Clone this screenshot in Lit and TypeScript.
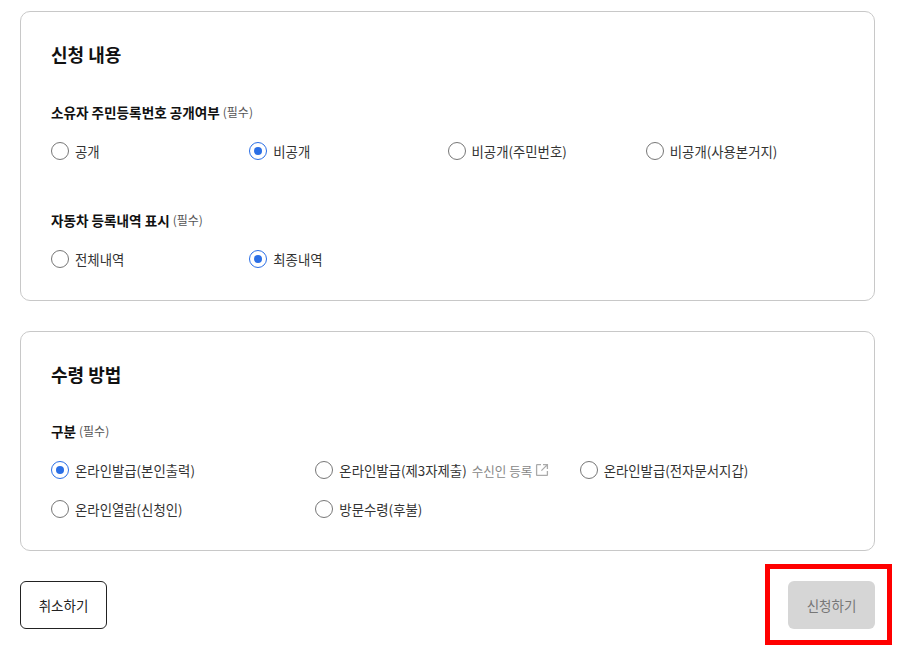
import { LitElement, html, css } from "lit";
import { customElement } from "lit/decorators.js";

@customElement("app-root")
export class AppRoot extends LitElement {
  static styles = css`
    :host {
      display: block;
      position: relative;
      width: 901px;
      height: 660px;
      background: #fff;
      font-family: "Noto Sans CJK KR", "Noto Sans", sans-serif;
      color: #111;
      box-sizing: border-box;
      overflow: hidden;
    }
    .page {
      width: 855px;
      margin-left: 20px;
      padding-top: 11px;
      display: flex;
      flex-direction: column;
      gap: 30px;
    }
    .card {
      border: 1px solid #c8c8c8;
      border-radius: 10px;
      padding: 30px 30px 31px;
      display: flex;
      flex-direction: column;
    }
    .card h2 {
      margin: 0;
      font-size: 18px;
      line-height: 25px;
      font-weight: 700;
    }
    .label {
      display: flex;
      align-items: center;
      gap: 3px;
      height: 20px;
      font-size: 13.6px;
      line-height: 20px;
      font-weight: 700;
      margin-top: 35px;
      white-space: nowrap;
    }
    .label small {
      font-size: 12px;
      font-weight: 400;
      color: #555;
    }
    .label.tight { margin-top: 34px; }
    .label.next { margin-top: 49px; }
    .grid {
      display: grid;
      margin-top: 19px;
    }
    .g4 { grid-template-columns: repeat(4, 1fr); }
    .g3 { grid-template-columns: repeat(3, 1fr); row-gap: 19px; }
    .opt {
      display: flex;
      align-items: center;
      height: 20px;
      gap: 6px;
      font-size: 13.4px;
      color: #333;
      white-space: nowrap;
    }
    .radio {
      width: 16px;
      height: 16px;
      border: 1px solid #777;
      border-radius: 50%;
      flex: none;
      display: flex;
      align-items: center;
      justify-content: center;
      background: #fff;
    }
    .radio.on { border-color: #2b6fe6; }
    .radio.on::after {
      content: "";
      width: 8px;
      height: 8px;
      border-radius: 50%;
      background: #2b6fe6;
    }
    .link {
      display: inline-flex;
      align-items: center;
      gap: 3px;
      margin-left: -1px;
      font-size: 12.6px;
      color: #888;
    }
    .link svg { display: block; }
    .actions {
      display: flex;
      justify-content: space-between;
    }
    button {
      width: 87px;
      height: 48px;
      border-radius: 6px;
      font: inherit;
      font-size: 13.5px;
      padding: 0;
      box-sizing: border-box;
    }
    .cancel {
      background: #fff;
      border: 1px solid #222;
      color: #222;
    }
    .submit {
      background: #d6d6d6;
      border: none;
      color: #777;
    }
    .mark {
      position: absolute;
      left: 765px;
      top: 564px;
      width: 127px;
      height: 81px;
      border: 5px solid #f00;
      box-sizing: border-box;
      pointer-events: none;
    }
  `;

  private opt(text: string, on = false, extra: unknown = null) {
    return html`<div class="opt"><span class=${on ? "radio on" : "radio"}></span><span>${text}</span>${extra}</div>`;
  }

  render() {
    const link = html`<span class="link">수신인 등록<svg width="14" height="14" viewBox="0 0 14 14" fill="none" stroke="#aaa" stroke-width="1.3">
        <path d="M6 1.6H2.2a.6.6 0 0 0-.6.6v9.6a.6.6 0 0 0 .6.6h9.6a.6.6 0 0 0 .6-.6V8" />
        <path d="M8 1.6h4.4V6M12.4 1.6 6.4 7.6" />
      </svg></span>`;
    return html`
      <div class="page">
        <section class="card">
          <h2>신청 내용</h2>
          <div class="label"><span>소유자 주민등록번호 공개여부</span><small>(필수)</small></div>
          <div class="grid g4">
            ${this.opt("공개")}
            ${this.opt("비공개", true)}
            ${this.opt("비공개(주민번호)")}
            ${this.opt("비공개(사용본거지)")}
          </div>
          <div class="label next"><span>자동차 등록내역 표시</span><small>(필수)</small></div>
          <div class="grid g4">
            ${this.opt("전체내역")}
            ${this.opt("최종내역", true)}
          </div>
        </section>
        <section class="card">
          <h2>수령 방법</h2>
          <div class="label tight"><span>구분</span><small>(필수)</small></div>
          <div class="grid g3">
            ${this.opt("온라인발급(본인출력)", true)}
            ${this.opt("온라인발급(제3자제출)", false, link)}
            ${this.opt("온라인발급(전자문서지갑)")}
            ${this.opt("온라인열람(신청인)")}
            ${this.opt("방문수령(후불)")}
          </div>
        </section>
        <div class="actions">
          <button class="cancel">취소하기</button>
          <button class="submit">신청하기</button>
        </div>
      </div>
      <div class="mark"></div>
    `;
  }
}
